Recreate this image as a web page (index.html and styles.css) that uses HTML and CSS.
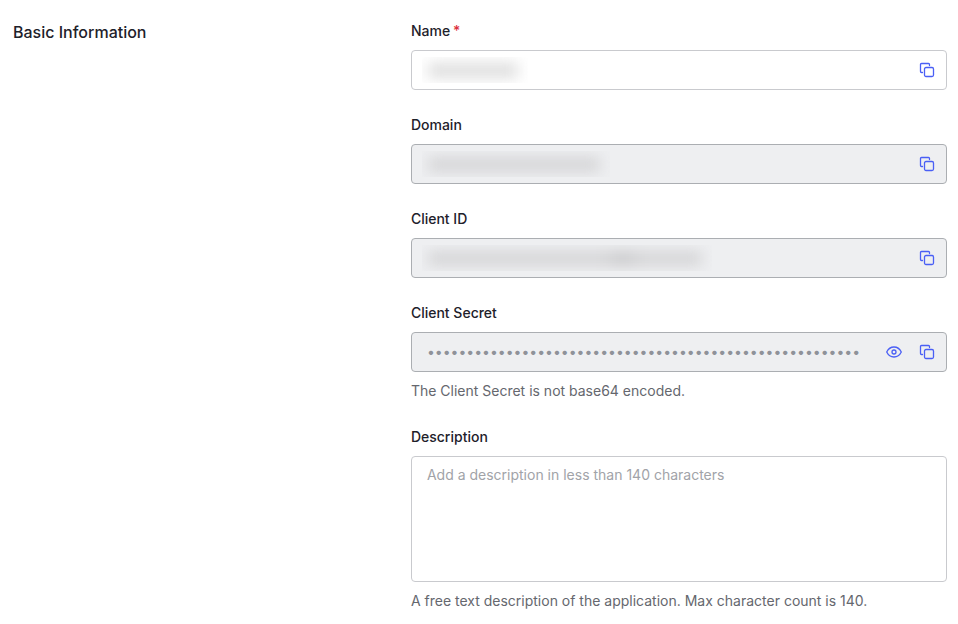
FILE: index.html
```html
<!DOCTYPE html>
<html lang="en">
<head>
<meta charset="utf-8">
<meta name="viewport" content="width=device-width, initial-scale=1">
<title>Basic Information</title>
<link rel="stylesheet" href="styles.css">
</head>
<body>
<svg class="sprite" aria-hidden="true">
  <symbol id="copy" viewBox="0 0 16 16">
    <path d="M3.500 10.500H2.500a1 1 0 0 1-1-1V2.500a1 1 0 0 1 1-1h7a1 1 0 0 1 1 1v1"/>
    <rect x="5.500" y="5.500" width="9" height="9" rx="1.500"/>
  </symbol>
  <symbol id="eye" viewBox="0 0 16 16">
    <path d="M.7 8C2.200 5 4.900 3 8 3s5.800 2 7.300 5c-1.500 3-4.200 5-7.300 5S2.200 11 .7 8z"/>
    <circle cx="8" cy="8" r="2"/>
  </symbol>
</svg>
<main class="section">
  <h2 class="section-title">Basic Information</h2>
  <form class="fields">
    <div class="field">
      <label class="label" for="name">Name<span class="required">*</span></label>
      <div class="control">
        <input class="input" id="name" type="text" required>
        <span class="redacted redacted-name"></span>
        <button class="action" type="button" aria-label="Copy name"><svg class="icon"><use href="#copy"/></svg></button>
      </div>
    </div>
    <div class="field">
      <label class="label" for="domain">Domain</label>
      <div class="control control-readonly">
        <input class="input" id="domain" type="text" readonly>
        <span class="redacted redacted-domain"></span>
        <button class="action" type="button" aria-label="Copy domain"><svg class="icon"><use href="#copy"/></svg></button>
      </div>
    </div>
    <div class="field">
      <label class="label" for="client-id">Client ID</label>
      <div class="control control-readonly">
        <input class="input" id="client-id" type="text" readonly>
        <span class="redacted redacted-client"></span>
        <button class="action" type="button" aria-label="Copy client ID"><svg class="icon"><use href="#copy"/></svg></button>
      </div>
    </div>
    <div class="field">
      <label class="label" for="secret">Client Secret</label>
      <div class="control control-readonly">
        <input class="input" id="secret" type="password" readonly value="0000000000000000000000000000000000000000000000000000000">
        <button class="action" type="button" aria-label="Show client secret"><svg class="icon"><use href="#eye"/></svg></button>
        <button class="action" type="button" aria-label="Copy client secret"><svg class="icon"><use href="#copy"/></svg></button>
      </div>
      <p class="hint">The Client Secret is not base64 encoded.</p>
    </div>
    <div class="field">
      <label class="label" for="description">Description</label>
      <textarea class="textarea" id="description" rows="5" placeholder="Add a description in less than 140 characters"></textarea>
      <p class="hint">A free text description of the application. Max character count is 140.</p>
    </div>
  </form>
</main>
</body>
</html>
```
FILE: styles.css
```css
* {
  box-sizing: border-box;
}

body {
  margin: 0;
  background: #fff;
  color: #1e212a;
  font: 14px/22px Inter, "Liberation Sans", sans-serif;
}

.sprite {
  position: absolute;
  width: 0;
  height: 0;
}

.section {
  display: grid;
  grid-template-columns: 5fr 7fr;
  column-gap: 15px;
  padding: 20px 11px 12px 13px;
}

.section-title {
  margin: 0;
  font-size: 16px;
  font-weight: 500;
  line-height: 24px;
}

.fields {
  display: grid;
  gap: 24px;
  min-width: 0;
}

.field {
  display: grid;
  gap: 8px;
}

.label {
  font-weight: 500;
}

.required {
  margin-left: 3px;
  color: #dc2f3c;
}

.control {
  position: relative;
  display: flex;
  align-items: center;
  height: 40px;
  padding-right: 11px;
  gap: 17px;
  border: 1px solid #c9cace;
  border-radius: 4px;
  background: #fff;
}

.control-readonly {
  border-color: #abaeb2;
  background: #eeeff1;
}

.input {
  flex: 1;
  min-width: 0;
  height: 100%;
  padding: 0 0 2px 15px;
  border: 0;
  outline: 0;
  background: transparent;
  color: #8f9299;
  font: inherit;
}

.action {
  display: flex;
  padding: 0;
  border: 0;
  background: none;
  color: #4a5ff5;
}

.icon {
  width: 16px;
  height: 16px;
  fill: none;
  stroke: currentColor;
  stroke-width: 1.3;
  stroke-linecap: round;
  stroke-linejoin: round;
}

.redacted {
  position: absolute;
  top: 6px;
  bottom: 6px;
  left: 10px;
  overflow: hidden;
  pointer-events: none;
}

.redacted::before {
  content: "";
  position: absolute;
  inset: 6px 10px 5px 6px;
  background: #d5d5d7;
  filter: blur(7px);
}

.redacted-name {
  width: 106px;
}

.redacted-name::before {
  background: #dedede;
}

.redacted-domain {
  width: 188px;
}

.redacted-client {
  width: 290px;
}

.redacted-client::before {
  background: linear-gradient(90deg, #d5d5d7 63%, #c8c8ca 71%, #d5d5d7 79%);
}

.textarea {
  display: block;
  width: 100%;
  height: 126px;
  padding: 7px 15px;
  border: 1px solid #c9cace;
  border-radius: 4px;
  background: #fff;
  color: inherit;
  font: inherit;
  resize: none;
}

.textarea::placeholder {
  color: #a1a3a8;
  opacity: 1;
}

.hint {
  margin: 0;
  color: #65676e;
}
```
